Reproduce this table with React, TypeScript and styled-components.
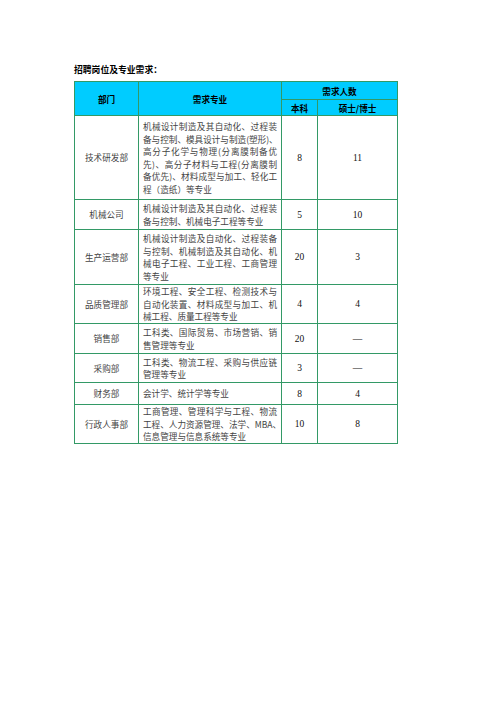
import styled, { createGlobalStyle } from "styled-components";

const GlobalStyle = createGlobalStyle`
    html, body {
        margin: 0;
        padding: 0;
        background: #ffffff;
    }
`

const Page = styled.div`
    width: 496px;
    height: 702px;
    box-sizing: border-box;
    padding: 64px 0 0 74px;
    font-family: "Liberation Serif", "Noto Sans CJK SC", serif;
`

const Title = styled.p`
    margin: 0 0 5px 0;
    font-family: "Noto Sans CJK SC", sans-serif;
    font-weight: 700;
    font-size: 8.8px;
    line-height: 12px;
    color: #000;
`

const Table = styled.table`
    border-collapse: collapse;
    table-layout: fixed;
    width: 323px;
`

const Row = styled.tr<{ $h: number }>`
    height: ${({ $h }) => $h}px;
`

const HeadCell = styled.th`
    background: #00ccff;
    border: 1px solid #339966;
    padding: 0;
    font-family: "Noto Sans CJK SC", sans-serif;
    font-weight: 700;
    font-size: 8.6px;
    line-height: 12px;
    color: #000;
    text-align: center;
    vertical-align: middle;
`

const Cell = styled.td<{ $left?: boolean }>`
    border: 1px solid #339966;
    padding: 0 ${({ $left }) => ($left ? "4px" : "2px")};
    font-family: "Noto Sans CJK SC", sans-serif;
    font-size: 8.6px;
    line-height: 12.5px;
    color: #444;
    text-align: ${({ $left }) => ($left ? "left" : "center")};
    vertical-align: middle;
`

const Num = styled.span`
    font-family: "Liberation Serif", serif;
    font-size: 9.5px;
    color: #111;
`

const Line = styled.span<{ $full?: boolean }>`
    display: block;
    white-space: nowrap;
    text-align: ${({ $full }) => ($full ? "justify" : "left")};
    text-align-last: ${({ $full }) => ($full ? "justify" : "left")};
`

type Dept = {
    name: string;
    lines: string[];
    bachelor: string;
    master: string;
    h: number;
}

const rows: Dept[] = [
    {
        name: "技术研发部",
        lines: [
            "机械设计制造及其自动化、过程装",
            "备与控制、模具设计与制造(塑形)、",
            "高分子化学与物理(分离膜制备优",
            "先)、高分子材料与工程(分离膜制",
            "备优先)、材料成型与加工、轻化工",
            "程（造纸）等专业",
        ],
        bachelor: "8",
        master: "11",
        h: 84,
    },
    {
        name: "机械公司",
        lines: ["机械设计制造及其自动化、过程装", "备与控制、机械电子工程等专业"],
        bachelor: "5",
        master: "10",
        h: 30,
    },
    {
        name: "生产运营部",
        lines: [
            "机械设计制造及自动化、过程装备",
            "与控制、机械制造及其自动化、机",
            "械电子工程、工业工程、工商管理",
            "等专业",
        ],
        bachelor: "20",
        master: "3",
        h: 55,
    },
    {
        name: "品质管理部",
        lines: ["环境工程、安全工程、检测技术与", "自动化装置、材料成型与加工、机", "械工程、质量工程等专业"],
        bachelor: "4",
        master: "4",
        h: 39,
    },
    {
        name: "销售部",
        lines: ["工科类、国际贸易、市场营销、销", "售管理等专业"],
        bachelor: "20",
        master: "—",
        h: 30,
    },
    {
        name: "采购部",
        lines: ["工科类、物流工程、采购与供应链", "管理等专业"],
        bachelor: "3",
        master: "—",
        h: 29,
    },
    {
        name: "财务部",
        lines: ["会计学、统计学等专业"],
        bachelor: "8",
        master: "4",
        h: 22,
    },
    {
        name: "行政人事部",
        lines: ["工商管理、管理科学与工程、物流", "工程、人力资源管理、法学、MBA、", "信息管理与信息系统等专业"],
        bachelor: "10",
        master: "8",
        h: 39,
    },
]

const App = (): JSX.Element => {
    return (
        <>
            <GlobalStyle />
            <Page>
                <Title>招聘岗位及专业需求：</Title>
                <Table>
                    <colgroup>
                        <col style={{ width: 64 }} />
                        <col style={{ width: 143 }} />
                        <col style={{ width: 36 }} />
                        <col style={{ width: 80 }} />
                    </colgroup>
                    <thead>
                        <Row $h={18}>
                            <HeadCell rowSpan={2}>部门</HeadCell>
                            <HeadCell rowSpan={2}>需求专业</HeadCell>
                            <HeadCell colSpan={2}>需求人数</HeadCell>
                        </Row>
                        <Row $h={16}>
                            <HeadCell>本科</HeadCell>
                            <HeadCell>硕士/博士</HeadCell>
                        </Row>
                    </thead>
                    <tbody>
                        {rows.map((r) => (
                            <Row $h={r.h} key={r.name}>
                                <Cell>{r.name}</Cell>
                                <Cell $left>
                                    {r.lines.map((l, i) => (
                                        <Line key={i} $full={i < r.lines.length - 1}>
                                            {l}
                                        </Line>
                                    ))}
                                </Cell>
                                <Cell>
                                    <Num>{r.bachelor}</Num>
                                </Cell>
                                <Cell>
                                    <Num>{r.master}</Num>
                                </Cell>
                            </Row>
                        ))}
                    </tbody>
                </Table>
            </Page>
        </>
    )
}

export default App;
